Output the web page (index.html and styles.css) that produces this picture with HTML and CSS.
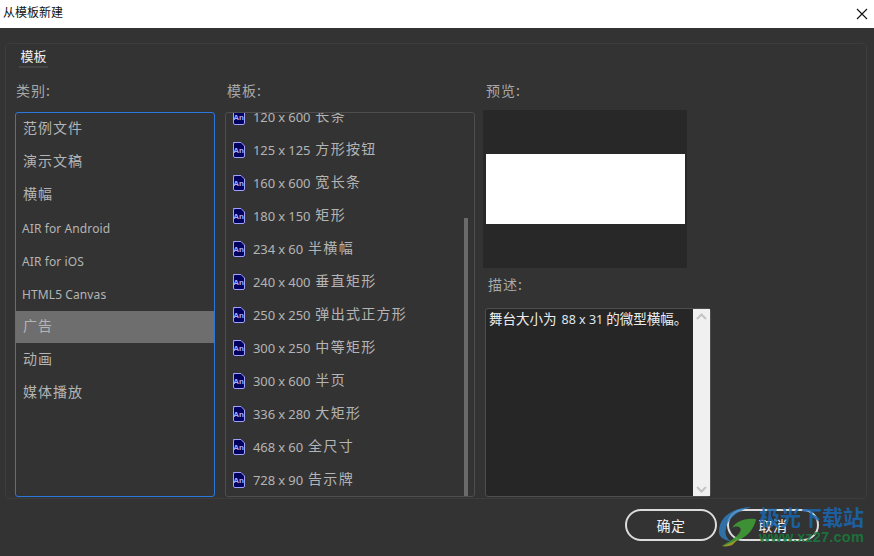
FILE: index.html
```html
<!DOCTYPE html>
<html lang="zh-CN">
<head>
<meta charset="utf-8">
<title>从模板新建</title>
<link rel="stylesheet" href="styles.css">
</head>
<body>
<div class="dialog">
  <header class="titlebar">
    <span class="title">从模板新建</span>
    <svg class="close" width="12" height="12" viewBox="0 0 12 12"><path d="M1 1l10 10M11 1L1 11" stroke="#111" stroke-width="1.1" fill="none"/></svg>
  </header>
  <section class="panel">
    <div class="tabs"><span class="tab">模板</span></div>
    <div class="columns">
      <div class="col col-cat">
        <div class="label">类别:</div>
        <ul class="catlist">
          <li>范例文件</li>
          <li>演示文稿</li>
          <li>横幅</li>
          <li class="latin">AIR for Android</li>
          <li class="latin">AIR for iOS</li>
          <li class="latin">HTML5 Canvas</li>
          <li class="selected">广告</li>
          <li>动画</li>
          <li>媒体播放</li>
        </ul>
      </div>
      <div class="col col-tpl">
        <div class="label">模板:</div>
        <div class="tplbox">
          <ul class="tpllist">
            <li><svg class="an" viewBox="0 0 13 16"><path d="M1.500.5h7.500l3.500 3.500v10a1.500 1.500 0 0 1-1.500 1.500h-8a1.500 1.500 0 0 1-1.500-1.500v-12a1.500 1.500 0 0 1 1.500-1.500z"/><text x="6.500" y="10.500">An</text></svg><span class="size">120 x 600</span><span class="cn">长条</span></li>
            <li><svg class="an" viewBox="0 0 13 16"><path d="M1.500.5h7.500l3.500 3.500v10a1.500 1.500 0 0 1-1.500 1.500h-8a1.500 1.500 0 0 1-1.500-1.500v-12a1.500 1.500 0 0 1 1.500-1.500z"/><text x="6.500" y="10.500">An</text></svg><span class="size">125 x 125</span><span class="cn">方形按钮</span></li>
            <li><svg class="an" viewBox="0 0 13 16"><path d="M1.500.5h7.500l3.500 3.500v10a1.500 1.500 0 0 1-1.500 1.500h-8a1.500 1.500 0 0 1-1.500-1.500v-12a1.500 1.500 0 0 1 1.500-1.500z"/><text x="6.500" y="10.500">An</text></svg><span class="size">160 x 600</span><span class="cn">宽长条</span></li>
            <li><svg class="an" viewBox="0 0 13 16"><path d="M1.500.5h7.500l3.500 3.500v10a1.500 1.500 0 0 1-1.500 1.500h-8a1.500 1.500 0 0 1-1.500-1.500v-12a1.500 1.500 0 0 1 1.500-1.500z"/><text x="6.500" y="10.500">An</text></svg><span class="size">180 x 150</span><span class="cn">矩形</span></li>
            <li><svg class="an" viewBox="0 0 13 16"><path d="M1.500.5h7.500l3.500 3.500v10a1.500 1.500 0 0 1-1.500 1.500h-8a1.500 1.500 0 0 1-1.500-1.500v-12a1.500 1.500 0 0 1 1.500-1.500z"/><text x="6.500" y="10.500">An</text></svg><span class="size">234 x 60</span><span class="cn">半横幅</span></li>
            <li><svg class="an" viewBox="0 0 13 16"><path d="M1.500.5h7.500l3.500 3.500v10a1.500 1.500 0 0 1-1.500 1.500h-8a1.500 1.500 0 0 1-1.500-1.500v-12a1.500 1.500 0 0 1 1.500-1.500z"/><text x="6.500" y="10.500">An</text></svg><span class="size">240 x 400</span><span class="cn">垂直矩形</span></li>
            <li><svg class="an" viewBox="0 0 13 16"><path d="M1.500.5h7.500l3.500 3.500v10a1.500 1.500 0 0 1-1.500 1.500h-8a1.500 1.500 0 0 1-1.500-1.500v-12a1.500 1.500 0 0 1 1.500-1.500z"/><text x="6.500" y="10.500">An</text></svg><span class="size">250 x 250</span><span class="cn">弹出式正方形</span></li>
            <li><svg class="an" viewBox="0 0 13 16"><path d="M1.500.5h7.500l3.500 3.500v10a1.500 1.500 0 0 1-1.500 1.500h-8a1.500 1.500 0 0 1-1.500-1.500v-12a1.500 1.500 0 0 1 1.500-1.500z"/><text x="6.500" y="10.500">An</text></svg><span class="size">300 x 250</span><span class="cn">中等矩形</span></li>
            <li><svg class="an" viewBox="0 0 13 16"><path d="M1.500.5h7.500l3.500 3.500v10a1.500 1.500 0 0 1-1.500 1.500h-8a1.500 1.500 0 0 1-1.500-1.500v-12a1.500 1.500 0 0 1 1.500-1.500z"/><text x="6.500" y="10.500">An</text></svg><span class="size">300 x 600</span><span class="cn">半页</span></li>
            <li><svg class="an" viewBox="0 0 13 16"><path d="M1.500.5h7.500l3.500 3.500v10a1.500 1.500 0 0 1-1.500 1.500h-8a1.500 1.500 0 0 1-1.500-1.500v-12a1.500 1.500 0 0 1 1.500-1.500z"/><text x="6.500" y="10.500">An</text></svg><span class="size">336 x 280</span><span class="cn">大矩形</span></li>
            <li><svg class="an" viewBox="0 0 13 16"><path d="M1.500.5h7.500l3.500 3.500v10a1.500 1.500 0 0 1-1.500 1.500h-8a1.500 1.500 0 0 1-1.500-1.500v-12a1.500 1.500 0 0 1 1.500-1.500z"/><text x="6.500" y="10.500">An</text></svg><span class="size">468 x 60</span><span class="cn">全尺寸</span></li>
            <li><svg class="an" viewBox="0 0 13 16"><path d="M1.500.5h7.500l3.500 3.500v10a1.500 1.500 0 0 1-1.500 1.500h-8a1.500 1.500 0 0 1-1.500-1.500v-12a1.500 1.500 0 0 1 1.500-1.500z"/><text x="6.500" y="10.500">An</text></svg><span class="size">728 x 90</span><span class="cn">告示牌</span></li>
          </ul>
          <div class="thumb"></div>
        </div>
      </div>
      <div class="col col-prev">
        <div class="label label-prev">预览:</div>
        <div class="preview"><div class="stage"></div></div>
        <div class="label label-desc">描述:</div>
        <div class="desc">
          <p class="desc-text">舞台大小为 <span class="num">88 x 31</span> 的微型横幅。</p>
          <div class="vbar">
            <svg width="17" height="14" viewBox="0 0 17 14"><path d="M4 9l4.500-4.500L13 9" stroke="#c4c4c4" stroke-width="2" fill="none"/></svg>
            <svg width="17" height="14" viewBox="0 0 17 14"><path d="M4 5l4.500 4.500L13 5" stroke="#c4c4c4" stroke-width="2" fill="none"/></svg>
          </div>
        </div>
      </div>
    </div>
  </section>
  <footer class="actions">
    <button class="btn">确定</button>
    <button class="btn">取消</button>
  </footer>
  <div class="watermark">
    <svg class="wm-logo" width="42" height="44" viewBox="0 0 44 44">
      <path d="M2 28C2 14 14 3 36 2 22 6 10 14 9 27c-.5 5 2 9 6 11C8 37 2 34 2 28z" fill="#2f7fc4" opacity=".8"/>
      <path d="M16 24c4-7 14-11 25-9-2 9-8 17-15 20-5 2-12 6-21 8 7-4 14-8 17-12 3-3 4-7 1-8-3-1-5 0-7 1z" fill="#3f9a35" opacity=".9"/>
      <path d="M5 43c5-1 12-4 17-7l-6 6c-3 1-7 2-11 1z" fill="#b7ad2a" opacity=".8"/>
    </svg>
    <div class="wm-text">
      <div class="wm-cn">极光下载站</div>
      <div class="wm-url">www.xz27.com</div>
    </div>
  </div>
</div>
</body>
</html>
```
FILE: styles.css
```css
* { box-sizing: border-box; }
html, body { margin: 0; padding: 0; }
body {
  width: 874px;
  height: 556px;
  overflow: hidden;
  background: #333;
  font-family: "Noto Sans CJK SC", "Noto Sans", sans-serif;
  color: #b4b4b4;
}
ul { list-style: none; margin: 0; padding: 0; }
.dialog { position: relative; width: 874px; height: 556px; display: flex; flex-direction: column; }

.titlebar {
  height: 28px;
  flex: none;
  background: #fff;
  color: #111;
  display: flex;
  align-items: center;
  justify-content: space-between;
  padding: 0 6px 4px 3px;
  font-size: 12px;
}
.title { line-height: 16px; }
.close { margin-top: 4px; }

.panel {
  margin: 15px 0 0 5px;
  width: 862px;
  height: 456px;
  flex: none;
  border: 1px solid #3c3c3c;
  border-radius: 4px;
  padding: 0 9px;
}
.tabs { height: 24px; padding-left: 4px; }
.tab {
  display: block;
  width: 29px;
  height: 24px;
  border-bottom: 2px solid #444;
  color: #f0f0f0;
  font-size: 13px;
  line-height: 24px;
  text-align: center;
}
.columns { display: flex; margin-top: 14px; align-items: flex-start; }
.col-cat { width: 200px; }
.col-tpl { width: 250px; margin-left: 10px; }
.col-prev { margin-left: 8px; }

.label { font-size: 14px; letter-spacing: 1px; height: 30px; line-height: 16px; padding-left: 1px; color: #a8a8a8; }
.col-tpl .label { padding-left: 2px; }

.catlist {
  height: 385px;
  border: 1px solid #2a78dc;
  border-radius: 3px;
  background: #333;
}
.catlist li {
  height: 33px;
  line-height: 29px;
  padding-left: 7px;
  font-size: 14px;
  letter-spacing: 1px;
}
.catlist li.latin { font-family: "Noto Sans", sans-serif; font-size: 12px; letter-spacing: 0.1px; line-height: 33px; padding-left: 6px; }
.catlist li.selected { background: #6e6e6e; height: 32px; margin-bottom: 1px; }

.tplbox {
  position: relative;
  height: 385px;
  border: 1px solid #4e4e4e;
  border-radius: 3px;
  overflow: hidden;
}
.tpllist { margin-top: -13px; }
.tpllist li {
  height: 33px;
  display: flex;
  align-items: center;
  padding-left: 6px;
}
.size { margin-left: 8px; font-family: "Noto Sans", sans-serif; font-size: 13px; letter-spacing: -0.100px; }
.cn { margin-left: 5px; font-size: 14px; letter-spacing: 1.300px; line-height: 16px; margin-top: -3px; }
.an { width: 13px; height: 16px; flex: none; margin-top: 1px; }
.an path { fill: #00005e; stroke: #a0a0ff; stroke-width: 1; }
.an text { fill: #b0b0ff; font-family: "Liberation Sans", sans-serif; font-size: 8px; font-weight: 700; text-anchor: middle; }
.thumb { position: absolute; left: 238px; top: 105px; width: 4px; height: 278px; background: #6a6a6a; }

.label-prev { height: 28px; padding-left: 3px; }
.preview {
  width: 204px;
  height: 158px;
  background: #282828;
  border-radius: 2px;
  display: flex;
  align-items: center;
  padding: 0 2px 0 3px;
}
.stage { width: 199px; height: 70px; background: #fff; }
.label-desc { height: 40px; line-height: 32px; padding-left: 5px; }
.desc {
  width: 226px;
  height: 189px;
  margin-left: 2px;
  border: 1px solid #4e4e4e;
  border-radius: 3px;
  background: #262626;
  display: flex;
}
.desc-text { flex: 1; margin: 0; padding: 0 0 0 3px; font-size: 13.500px; line-height: 18px; color: #ececec; white-space: nowrap; }
.num { margin-left: 2px; font-family: "Noto Sans", sans-serif; font-size: 12.500px; color: #dfe6ee; }
.vbar {
  width: 17px;
  flex: none;
  background: #f0f0f0;
  display: flex;
  flex-direction: column;
  justify-content: space-between;
  padding: 1px 0 0;
}

.actions { display: flex; gap: 10px; padding: 10px 0 0 625px; }
.btn {
  width: 92px;
  height: 32px;
  padding: 0;
  background: transparent;
  border: 2px solid #dcdcdc;
  border-radius: 16px;
  color: #f0f0f0;
  font-family: inherit;
  font-size: 14px;
  letter-spacing: 0.5px;
}

.watermark {
  position: absolute;
  left: 717px;
  top: 504px;
  display: flex;
  pointer-events: none;
}
.wm-logo { flex: none; }
.wm-cn {
  font-size: 21px;
  font-weight: 700;
  line-height: 25px;
  color: rgba(26, 104, 178, 0.85);
}
.wm-url {
  font-family: "Liberation Sans", sans-serif;
  font-size: 14.500px;
  font-weight: 700;
  line-height: 16px;
  letter-spacing: 0.200px;
  color: rgba(24, 122, 60, 0.9);
}
```
